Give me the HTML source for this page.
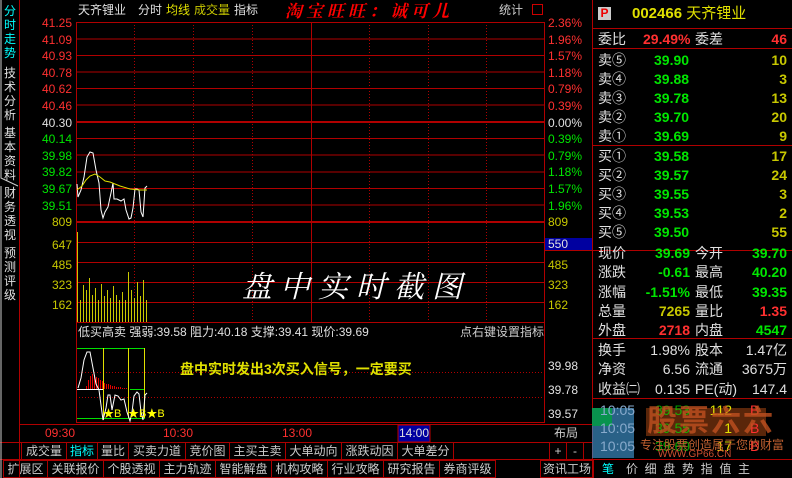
<!DOCTYPE html><html><head><meta charset="utf-8"><style>
body{margin:0;width:792px;height:478px;background:#000;overflow:hidden;font-family:"Liberation Sans","Noto Sans CJK SC",sans-serif;font-size:12px;position:relative}
.a{position:absolute;white-space:nowrap;line-height:14px}
.r{text-align:right}
.g{color:#00e600}.rd{color:#ff3030}.w{color:#e0e0e0}.y{color:#e0e000}.c{color:#00ffff}
.tab{position:absolute;border:1px solid #a00;color:#ccc;height:16px;line-height:16px;text-align:center;font-size:12px;top:0}
</style></head><body>
<svg width="792" height="478" style="position:absolute;left:0;top:0">
<g stroke="#b00000" stroke-width="1" fill="none">
<line x1="19.5" y1="0" x2="19.5" y2="478"/>
<rect x="76.5" y="22.5" width="468" height="400"/>
<line x1="76" y1="39" x2="545" y2="39"/><line x1="76" y1="55.5" x2="545" y2="55.5"/><line x1="76" y1="72" x2="545" y2="72"/><line x1="76" y1="88.5" x2="545" y2="88.5"/><line x1="76" y1="105" x2="545" y2="105"/>
<line x1="76" y1="122" x2="545" y2="122" stroke-width="2"/>
<line x1="76" y1="138.5" x2="545" y2="138.5"/><line x1="76" y1="155" x2="545" y2="155"/><line x1="76" y1="172" x2="545" y2="172"/><line x1="76" y1="188.5" x2="545" y2="188.5"/><line x1="76" y1="205" x2="545" y2="205"/>
<line x1="76" y1="222" x2="545" y2="222" stroke-width="2"/>
<line x1="76" y1="242.5" x2="545" y2="242.5"/><line x1="76" y1="262.5" x2="545" y2="262.5"/><line x1="76" y1="282.5" x2="545" y2="282.5"/><line x1="76" y1="302.5" x2="545" y2="302.5"/>
<line x1="76" y1="322.5" x2="545" y2="322.5"/>
<line x1="311.5" y1="22" x2="311.5" y2="322"/>
<g stroke-dasharray="1,2"><line x1="134.5" y1="22" x2="134.5" y2="322"/><line x1="193.5" y1="22" x2="193.5" y2="322"/><line x1="252.5" y1="22" x2="252.5" y2="322"/><line x1="369.5" y1="22" x2="369.5" y2="322"/><line x1="428.5" y1="22" x2="428.5" y2="322"/><line x1="486.5" y1="22" x2="486.5" y2="322"/>
<line x1="76" y1="372.5" x2="545" y2="372.5"/><line x1="76" y1="397.5" x2="545" y2="397.5"/></g>
<line x1="0" y1="442.5" x2="592" y2="442.5"/><line x1="20" y1="424.5" x2="592" y2="424.5"/>
<line x1="592.5" y1="0" x2="592.5" y2="478"/>
<line x1="592" y1="28.5" x2="792" y2="28.5"/><line x1="592" y1="48.5" x2="792" y2="48.5"/><line x1="592" y1="145.5" x2="792" y2="145.5"/>
<line x1="545" y1="250.5" x2="792" y2="250.5"/><line x1="592" y1="338.5" x2="792" y2="338.5"/><line x1="592" y1="398.5" x2="792" y2="398.5"/><line x1="592" y1="459.5" x2="792" y2="459.5"/>
<line x1="0" y1="459.5" x2="592" y2="459.5"/>
</g>
<rect x="545" y="238" width="47" height="12" fill="#0000a0"/>
<g stroke="#ccc" fill="none"><path d="M1 0V178 L18 186 M1 186V478"/></g>
<polyline fill="none" stroke="#fff" stroke-width="1" points="77,184 78,197 81,190 84,177 87,157 90,152 93,153 96,170 99,183 101,210 103,218 105,212 108,207 111,193 113,183 114,199 117,199 121,201 124,199 126,210 129,219 131,218 133,208 135,189 137,189 139,190 141,212 143,217 145,188 147,186"/>
<polyline fill="none" stroke="#e0e000" stroke-width="1" points="77,190 82,186 86,180 90,176 95,174 100,177 105,181 110,182 120,186 130,189 140,190 147,190"/>
<g stroke="#c8c800"><line x1="77.5" y1="232" x2="77.5" y2="322"/><line x1="80.5" y1="300" x2="80.5" y2="322"/><line x1="83.5" y1="285" x2="83.5" y2="322"/><line x1="86.5" y1="290" x2="86.5" y2="322"/><line x1="89.5" y1="278" x2="89.5" y2="322"/><line x1="92.5" y1="295" x2="92.5" y2="322"/><line x1="95.5" y1="288" x2="95.5" y2="322"/><line x1="98.5" y1="300" x2="98.5" y2="322"/><line x1="101.5" y1="284" x2="101.5" y2="322"/><line x1="104.5" y1="296" x2="104.5" y2="322"/><line x1="107.5" y1="290" x2="107.5" y2="322"/><line x1="110.5" y1="298" x2="110.5" y2="322"/><line x1="113.5" y1="286" x2="113.5" y2="322"/><line x1="116.5" y1="295" x2="116.5" y2="322"/><line x1="119.5" y1="300" x2="119.5" y2="322"/><line x1="122.5" y1="292" x2="122.5" y2="322"/><line x1="125.5" y1="300" x2="125.5" y2="322"/><line x1="128.5" y1="272" x2="128.5" y2="322"/><line x1="131.5" y1="290" x2="131.5" y2="322"/><line x1="134.5" y1="298" x2="134.5" y2="322"/><line x1="137.5" y1="282" x2="137.5" y2="322"/><line x1="140.5" y1="296" x2="140.5" y2="322"/><line x1="143.5" y1="280" x2="143.5" y2="322"/><line x1="146.5" y1="300" x2="146.5" y2="322"/></g>
<g stroke="#00e000"><line x1="77" y1="348.5" x2="145" y2="348.5"/><line x1="77" y1="418.5" x2="145" y2="418.5"/><line x1="130" y1="389.5" x2="145" y2="389.5"/></g>
<g stroke="#e0e000"><line x1="103.5" y1="348" x2="103.5" y2="420"/><line x1="128.5" y1="348" x2="128.5" y2="418"/><line x1="144.5" y1="348" x2="144.5" y2="418"/></g>
<line x1="77" y1="389.5" x2="103" y2="389.5" stroke="#fff"/>
<g stroke="#e00000"><line x1="86.5" y1="386" x2="86.5" y2="389"/><line x1="88.5" y1="380" x2="88.5" y2="389"/><line x1="90.5" y1="376" x2="90.5" y2="389"/><line x1="92.5" y1="374" x2="92.5" y2="389"/><line x1="94.5" y1="375" x2="94.5" y2="389"/><line x1="96.5" y1="377" x2="96.5" y2="389"/><line x1="98.5" y1="378" x2="98.5" y2="389"/><line x1="100.5" y1="380" x2="100.5" y2="389"/><line x1="102.5" y1="381" x2="102.5" y2="389"/><line x1="104.5" y1="383" x2="104.5" y2="389"/><line x1="106.5" y1="384" x2="106.5" y2="389"/><line x1="108.5" y1="384" x2="108.5" y2="389"/><line x1="110.5" y1="385" x2="110.5" y2="389"/><line x1="112.5" y1="386" x2="112.5" y2="389"/><line x1="114.5" y1="386" x2="114.5" y2="389"/><line x1="116.5" y1="387" x2="116.5" y2="389"/><line x1="118.5" y1="387" x2="118.5" y2="389"/><line x1="120.5" y1="387" x2="120.5" y2="389"/><line x1="122.5" y1="388" x2="122.5" y2="389"/><line x1="124.5" y1="388" x2="124.5" y2="389"/><line x1="126.5" y1="388" x2="126.5" y2="389"/></g>
<polyline fill="none" stroke="#fff" points="78,388 81,378 84,360 87,352 90,352 93,368 96,384 99,390 101,405 103,420 106,408 108,395 110,395 112,410 115,395 118,396 121,400 124,399 127,412 130,421 132,412 134,396 137,392 139,394 141,412 143,420 145,395 147,393"/>
<text x="103" y="417" fill="#ff0" font-size="11">★B</text><text x="128" y="417" fill="#ff0" font-size="11">★B★B</text>
<rect x="398" y="425" width="32" height="17" fill="#0000a0" stroke="#b00"/>
<rect x="592" y="408" width="42" height="50" fill="#3a8ac0" opacity=".7"/>
<rect x="592" y="408" width="20" height="18" fill="#00a040" opacity=".8"/>
<rect x="646" y="408" width="120" height="28" fill="#8a3a10" opacity=".65"/>
</svg>
<div class="a c" style="left:4px;top:4px;width:14px;line-height:14px;font-size:12px;white-space:normal">分时走势</div>
<div class="a w" style="left:4px;top:66px;width:14px;font-size:12px;white-space:normal">技术分析</div>
<div class="a w" style="left:4px;top:126px;width:14px;font-size:12px;white-space:normal">基本资料</div>
<div class="a w" style="left:4px;top:186px;width:14px;font-size:12px;white-space:normal">财务透视</div>
<div class="a w" style="left:4px;top:246px;width:14px;font-size:12px;white-space:normal">预测评级</div>
<div class="a w" style="left:78px;top:3px">天齐锂业</div>
<div class="a w" style="left:138px;top:3px">分时</div>
<div class="a y" style="left:166px;top:3px">均线</div>
<div class="a" style="color:#c8c800;left:194px;top:3px">成交量</div>
<div class="a w" style="left:234px;top:3px">指标</div>
<div class="a rd" style="left:285px;top:1px;font-size:17px;font-weight:bold;font-style:italic;letter-spacing:4px;font-family:'Noto Serif CJK SC',serif;line-height:18px;color:#f00">淘宝旺旺：诚可儿</div>
<div class="a w" style="left:499px;top:3px;color:#ccc">统计</div>
<div class="a" style="left:532px;top:4px;width:9px;height:9px;border:1px solid #c00"></div>
<div class="a r" style="left:20px;width:52px;top:15px;line-height:16.6px"><span class="rd">41.25<br>41.09<br>40.93<br>40.78<br>40.62<br>40.46</span><br><span class="w">40.30</span><br><span class="g">40.14<br>39.98<br>39.82<br>39.67<br>39.51</span><br><span style="color:#c8c800">809</span></div>
<div class="a r" style="left:20px;width:52px;top:235px;line-height:20px;color:#c8c800">647<br>485<br>323<br>162</div>
<div class="a" style="left:548px;top:15px;line-height:16.6px"><span class="rd">2.36%<br>1.96%<br>1.57%<br>1.18%<br>0.79%<br>0.39%</span><br><span class="w">0.00%</span><br><span class="g">0.39%<br>0.79%<br>1.18%<br>1.57%<br>1.96%</span><br><span style="color:#c8c800">809</span></div>
<div class="a w" style="left:548px;top:238px;line-height:12px">550</div>
<div class="a" style="left:548px;top:255px;line-height:20px;color:#c8c800">485<br>323<br>162</div>
<div class="a w" style="left:242px;top:266px;font-size:30px;line-height:36px;letter-spacing:8px;font-family:'Noto Serif CJK SC',serif;color:#fff;font-style:italic">盘中实时截图</div>
<div class="a w" style="left:78px;top:325px">低买高卖 强弱:39.58 阻力:40.18 支撑:39.41 现价:39.69</div>
<div class="a" style="left:460px;top:325px;color:#ccc">点右键设置指标</div>
<div class="a" style="left:180px;top:360px;color:#e0e000;font-weight:bold;font-size:14px;line-height:18px">盘中实时发出3次买入信号，一定要买</div>
<div class="a w" style="left:548px;top:354px;line-height:24px">39.98<br>39.78<br>39.57</div>
<div class="a rd" style="left:45px;top:426px">09:30</div>
<div class="a rd" style="left:163px;top:426px">10:30</div>
<div class="a rd" style="left:282px;top:426px">13:00</div>
<div class="a w" style="left:399px;top:426px">14:00</div>
<div class="a w" style="left:554px;top:426px;color:#ccc">布局</div>
<div class="tab" style="left:21px;top:442px;width:44px">成交量</div>
<div class="tab c" style="left:66px;top:442px;width:30px;color:#0ff">指标</div>
<div class="tab" style="left:97px;top:442px;width:30px">量比</div>
<div class="tab" style="left:128px;top:442px;width:56px">买卖力道</div>
<div class="tab" style="left:185px;top:442px;width:43px">竞价图</div>
<div class="tab" style="left:229px;top:442px;width:55px">主买主卖</div>
<div class="tab" style="left:285px;top:442px;width:55px">大单动向</div>
<div class="tab" style="left:341px;top:442px;width:55px">涨跌动因</div>
<div class="tab" style="left:397px;top:442px;width:55px">大单差分</div>
<div class="tab" style="left:549px;top:442px;width:16px">+</div>
<div class="tab" style="left:566px;top:442px;width:16px">-</div>
<div class="tab" style="left:3px;top:460px;width:43px">扩展区</div>
<div class="tab" style="left:47px;top:460px;width:55px">关联报价</div>
<div class="tab y" style="left:103px;top:460px;width:55px">个股透视</div>
<div class="tab y" style="left:159px;top:460px;width:55px">主力轨迹</div>
<div class="tab y" style="left:215px;top:460px;width:55px">智能解盘</div>
<div class="tab y" style="left:271px;top:460px;width:55px">机构攻略</div>
<div class="tab y" style="left:327px;top:460px;width:55px">行业攻略</div>
<div class="tab y" style="left:383px;top:460px;width:55px">研究报告</div>
<div class="tab y" style="left:439px;top:460px;width:55px">券商评级</div>
<div class="tab y" style="left:540px;top:460px;width:52px">资讯工场</div>
<div class="a" style="left:598px;top:7px;width:13px;height:13px;background:#ccc;color:#e00;font-weight:bold;text-align:center;line-height:13px">P</div>
<div class="a y" style="left:632px;top:6px;font-size:15px;line-height:16px;font-weight:bold">002466 <span style="font-weight:normal">天齐锂业</span></div>
<div class="a w" style="left:598px;top:31px;font-size:14px;line-height:16px">委比</div>
<div class="a rd" style="left:643px;top:31px;font-size:14px;line-height:16px;font-weight:bold">29.49%</div>
<div class="a w" style="left:695px;top:31px;font-size:14px;line-height:16px">委差</div>
<div class="a rd r" style="left:740px;width:47px;top:31px;font-size:14px;line-height:16px;font-weight:bold">46</div>
<div class="a w" style="left:598px;top:51px;font-size:14px;line-height:19px">卖⑤<br>卖④<br>卖③<br>卖②<br>卖①</div>
<div class="a g" style="left:654px;top:51px;font-size:14px;line-height:19px;font-weight:bold">39.90<br>39.88<br>39.78<br>39.70<br>39.69</div>
<div class="a r" style="left:740px;width:47px;top:51px;font-size:14px;line-height:19px;font-weight:bold;color:#c8c800">10<br>3<br>13<br>20<br>9</div>
<div class="a w" style="left:598px;top:147px;font-size:14px;line-height:19px">买①<br>买②<br>买③<br>买④<br>买⑤</div>
<div class="a g" style="left:654px;top:147px;font-size:14px;line-height:19px;font-weight:bold">39.58<br>39.57<br>39.55<br>39.53<br>39.50</div>
<div class="a r" style="left:740px;width:47px;top:147px;font-size:14px;line-height:19px;font-weight:bold;color:#c8c800">17<br>24<br>3<br>2<br>55</div>
<div class="a w" style="left:598px;top:244px;font-size:14px;line-height:19.3px">现价<br>涨跌<br>涨幅<br>总量<br>外盘</div>
<div class="a r" style="left:640px;width:50px;top:244px;font-size:14px;line-height:19.3px;font-weight:bold"><span class="g">39.69<br>-0.61<br>-1.51%</span><br><span style="color:#c8c800">7265</span><br><span class="rd">2718</span></div>
<div class="a w" style="left:695px;top:244px;font-size:14px;line-height:19.3px">今开<br>最高<br>最低<br>量比<br>内盘</div>
<div class="a r" style="left:740px;width:47px;top:244px;font-size:14px;line-height:19.3px;font-weight:bold"><span class="g">39.70<br>40.20<br>39.35</span><br><span class="rd">1.35</span><br><span class="g">4547</span></div>
<div class="a w" style="left:598px;top:341px;font-size:14px;line-height:19.3px">换手<br>净资<br>收益㈡</div>
<div class="a r w" style="left:640px;width:50px;top:341px;font-size:14px;line-height:19.3px">1.98%<br>6.56<br>0.135</div>
<div class="a w" style="left:695px;top:341px;font-size:14px;line-height:19.3px">股本<br>流通<br>PE(动)</div>
<div class="a r w" style="left:740px;width:47px;top:341px;font-size:14px;line-height:19.3px">1.47亿<br>3675万<br>147.4</div>
<div class="a" style="left:600px;top:401px;font-size:14px;line-height:18px;color:#8ac">10:05<br>10:05<br>10:05</div>
<div class="a g" style="left:655px;top:401px;font-size:14px;line-height:18px;opacity:.7">39.53<br>39.55<br>39.69</div>
<div class="a y r" style="left:700px;width:32px;top:401px;font-size:14px;line-height:18px">112<br>1<br>17</div>
<div class="a rd" style="left:750px;top:401px;font-size:14px;line-height:18px">B<br>B<br>B</div>
<div class="a" style="left:647px;top:406px;font-size:30px;line-height:32px;color:#c05020;font-weight:bold;opacity:.8;letter-spacing:2px">股票六六</div>
<div class="a" style="left:640px;top:438px;font-size:12px;color:#c06030">专注股票创造属于您的财富</div>
<div class="a" style="left:658px;top:450px;font-size:10px;color:#d05030;line-height:10px">WWW.GP66.CN</div>
<div class="a c" style="left:602px;top:462px;color:#0ff">笔</div>
<div class="a w" style="left:626px;top:462px;color:#ccc">价 &nbsp;细 &nbsp;盘 &nbsp;势 &nbsp;指 &nbsp;值 &nbsp;主</div>
</body></html>
